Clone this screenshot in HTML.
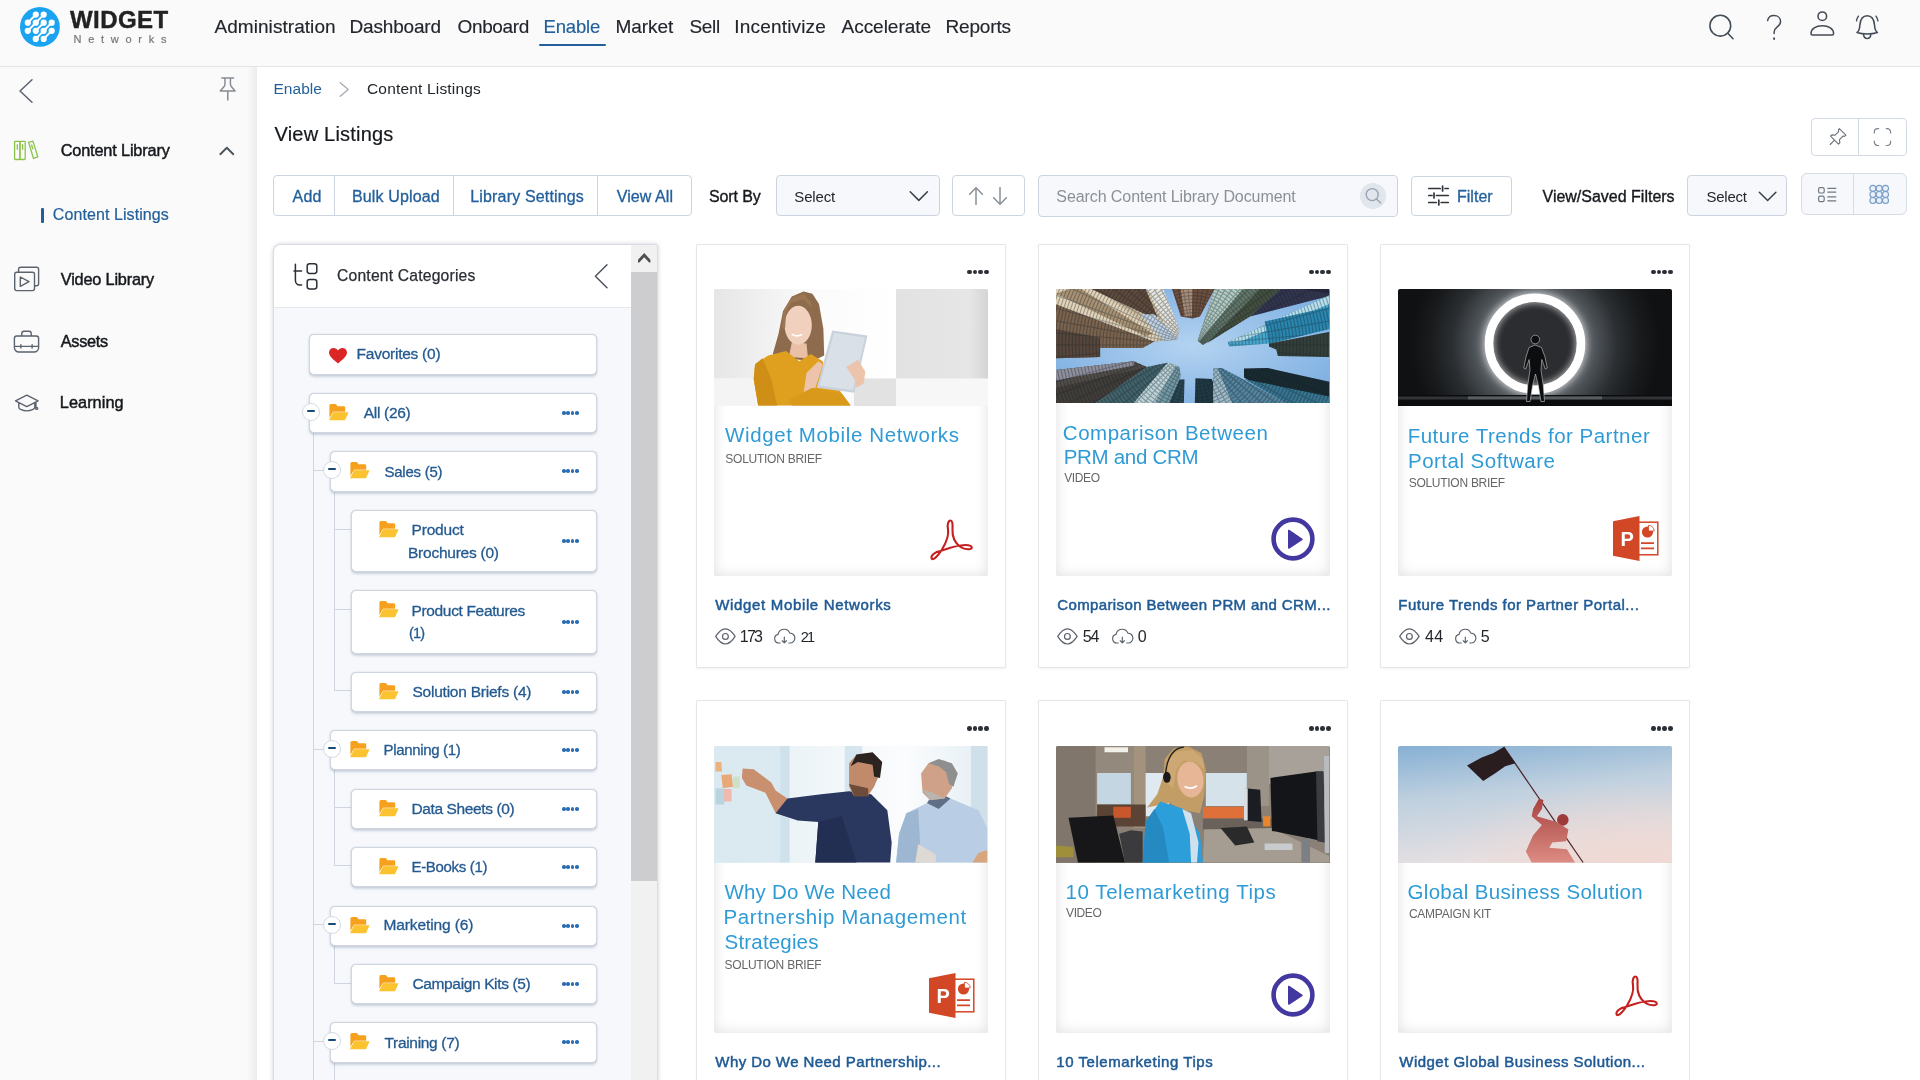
<!DOCTYPE html>
<html lang="en">
<head>
<meta charset="utf-8">
<title>View Listings - Content Library</title>
<style>
*{box-sizing:border-box;margin:0;padding:0}
html,body{width:1920px;height:1080px;overflow:hidden;background:#fff}
body{font-family:"Liberation Sans",Arial,sans-serif;color:#1f2329;position:relative;font-size:16px}
.top,.side,.main{will-change:transform}
svg{display:block;overflow:visible;position:absolute}
a{text-decoration:none;color:inherit}
.t{position:absolute;white-space:nowrap;line-height:1;display:block}
.abs{position:absolute}
/* top bar */
.top{position:absolute;left:0;top:0;width:1920px;height:67px;background:#fafafa;border-bottom:1px solid #e2e6eb;z-index:5}
.nav .t{color:#22262c}
.nav .on{color:#23609b}
.nav u{position:absolute;left:539px;top:44px;width:67px;height:2px;background:#23609b;border-radius:1px}
/* sidebar */
.side{position:absolute;left:0;top:67px;width:257px;height:1013px;background:#fafafa;z-index:3}
.side:after{content:"";position:absolute;right:0;top:0;width:10px;height:100%;background:linear-gradient(to right,rgba(0,0,0,0),rgba(0,0,0,.055))}
.side .t{color:#15181c}
.side .cur{color:#23609b}
.side .bar{position:absolute;left:41px;top:141px;width:3px;height:15px;background:#23609b;border-radius:1px}
/* main */
.main{position:absolute;left:257px;top:67px;width:1663px;height:1013px;background:#fff;z-index:2}
.box{position:absolute;background:#fff;border:1px solid #ccd5df;border-radius:4px}
.sel{position:absolute;background:#f6f8fb;border:1px solid #ccd5df;border-radius:4px}
.vd{position:absolute;width:1px;background:#ccd5df}
.blue{color:#23609c}
/* tree panel */
.panel{position:absolute;left:16px;top:177px;width:386px;height:840px;background:#f6f8fc;border:1px solid #d9dde3;border-bottom:0;border-radius:8px 3px 0 0;box-shadow:0 0 4px rgba(40,50,70,.22);overflow:hidden}
.phead{position:absolute;left:0;top:0;width:357px;height:63px;background:#fff;border-bottom:1px solid #e3e8ef}
.sbar{position:absolute;left:357px;top:0;width:27px;height:840px;background:#f1f1f1}
.sbar .up{position:absolute;left:0;top:0;width:27px;height:27px;background:#f1f1f1}
.sbar .th{position:absolute;left:0;top:27px;width:27px;height:609px;background:#cdcdcf}
.node{position:absolute;background:#fff;border:1px solid #d0d6df;border-radius:5px;box-shadow:0 1.500px 2.500px rgba(70,90,120,.24),0 0 1px rgba(70,90,120,.25)}
.node .t{color:#245a90}
.tg{position:absolute;width:18px;height:18px;border-radius:50%;background:#fff;border:1px solid #d3dae4}
.tg:after{content:"";position:absolute;left:4px;top:6.5px;width:8px;height:2px;background:#174a7c;border-radius:1px}
.ln{position:absolute;background:#cfd6df}
.dots{position:absolute;width:17px;height:4px}
.dots i{position:absolute;top:0;width:3.6px;height:3.6px;border-radius:50%;background:#2a6db5}
/* cards */
.card{position:absolute;width:310px;height:424px;background:#fff;border:1px solid #e5e6e9;border-radius:1px;box-shadow:0 1px 2px rgba(0,0,0,.05)}
.card .t{color:#22262b}
.thumb{position:absolute;left:17px;top:45px;width:274px;height:287px;background:#fff;box-shadow:inset 0 0 14px rgba(0,0,0,.13);overflow:hidden;border-radius:2px}
.thumb .tt{color:#2f9bd6}
.thumb .ts{color:#666}
.cd{position:absolute;width:22px;height:5px}
.cd i{position:absolute;top:0;width:4.6px;height:4.6px;border-radius:50%;background:#2b2f36}
</style>
</head>
<body>
<header class="top">
<svg style="left:0;top:0" width="70" height="56" viewBox="0 0 70 56"><circle cx="39.9" cy="26.9" r="19.9" fill="#1aa3f0"/><g stroke="#fff" stroke-width="2" stroke-linecap="round"><line x1="35.8" y1="14.6" x2="27.8" y2="22.7"/><line x1="43.7" y1="14.6" x2="35.8" y2="22.7"/><line x1="35.8" y1="22.7" x2="27.8" y2="30.8"/><line x1="43.7" y1="22.7" x2="35.8" y2="30.8"/><line x1="51.7" y1="22.7" x2="43.7" y2="30.8"/><line x1="43.7" y1="30.8" x2="35.8" y2="38.9"/><line x1="51.7" y1="30.8" x2="43.7" y2="38.9"/></g><g fill="#fff"><circle cx="35.8" cy="14.6" r="3.1"/><circle cx="43.7" cy="14.6" r="3.1"/><circle cx="27.8" cy="22.7" r="3.1"/><circle cx="35.8" cy="22.7" r="3.1"/><circle cx="43.7" cy="22.7" r="3.1"/><circle cx="51.7" cy="22.7" r="3.1"/><circle cx="27.8" cy="30.8" r="3.1"/><circle cx="35.8" cy="30.8" r="3.1"/><circle cx="43.7" cy="30.8" r="3.1"/><circle cx="51.7" cy="30.8" r="3.1"/><circle cx="35.8" cy="38.9" r="3.1"/><circle cx="43.7" cy="38.9" r="3.1"/></g></svg>
<span class="t" style="left:70.00px;top:8px;font-size:24px;letter-spacing:0.414px;font-weight:700;color:#222;-webkit-text-stroke:0.4px currentColor;">WIDGET</span>
<span class="t" style="left:73.50px;top:34px;font-size:11px;letter-spacing:6.737px;color:#777;-webkit-text-stroke:0.2px currentColor;">Networks</span>
<nav class="nav">
<a class="t" style="left:214.50px;top:17px;font-size:19px;letter-spacing:0.053px;-webkit-text-stroke:0.15px currentColor;">Administration</a>
<a class="t" style="left:349.50px;top:17px;font-size:19px;letter-spacing:-0.173px;-webkit-text-stroke:0.15px currentColor;">Dashboard</a>
<a class="t" style="left:457.50px;top:17px;font-size:19px;letter-spacing:-0.346px;-webkit-text-stroke:0.15px currentColor;">Onboard</a>
<a class="t on" style="left:543.50px;top:18px;font-size:18.5px;letter-spacing:-0.163px;-webkit-text-stroke:0.15px currentColor;">Enable</a>
<a class="t" style="left:615.40px;top:17px;font-size:19px;letter-spacing:-0.038px;-webkit-text-stroke:0.15px currentColor;">Market</a>
<a class="t" style="left:689.50px;top:17px;font-size:19px;letter-spacing:-0.320px;-webkit-text-stroke:0.15px currentColor;">Sell</a>
<a class="t" style="left:734.30px;top:17px;font-size:19px;letter-spacing:0.180px;-webkit-text-stroke:0.15px currentColor;">Incentivize</a>
<a class="t" style="left:841.50px;top:17px;font-size:19px;letter-spacing:-0.022px;-webkit-text-stroke:0.15px currentColor;">Accelerate</a>
<a class="t" style="left:945.50px;top:17px;font-size:19px;letter-spacing:-0.171px;-webkit-text-stroke:0.15px currentColor;">Reports</a>
<u></u></nav>
<svg style="left:1700px;top:8px" width="200" height="40" viewBox="1700 8 200 40" fill="none" stroke="#444c56" stroke-width="1.55" stroke-linecap="round" stroke-linejoin="round">
<circle cx="1720.3" cy="25.7" r="10.4"/><path d="M1727.8 33.2 L1733 38.8"/>
<path d="M1767.6 20.6c.6-3 3-5 6.4-5 3.8 0 6.6 2.500 6.600 6 0 2.600-1.500 4-3.600 5.600-2 1.500-2.900 2.700-2.900 5v1.300" stroke-width="1.5"/><path d="M1774.100 38.200v.8" stroke-width="1.900"/>
<circle cx="1822.3" cy="16.2" r="4.3"/><path d="M1811 33.500c0-4.500 4.800-7.800 11.300-7.800s11.300 3.300 11.300 7.800c0 .9-.5 1.400-1.400 1.400h-19.800c-.9 0-1.400-.5-1.400-1.400z"/>
<path d="M1857 32.400c2.300-1.200 2.600-3.500 2.900-7.400.4-5.500 2.900-9.300 7.300-9.300s6.900 3.800 7.300 9.300c.3 3.900.6 6.200 2.900 7.400-3 1-6.400 1.500-10.200 1.500s-7.200-.5-10.200-1.500z"/><path d="M1863.600 34.800c.4 2.400 1.700 3.700 3.600 3.700s3.200-1.300 3.600-3.700"/>
<path d="M1858.400 16.200c-.9 1.300-1.600 2.900-1.900 4.600M1876 16.200c.9 1.300 1.600 2.900 1.900 4.600" stroke-width="1.400"/>
</svg>
</header>
<aside class="side">
<svg style="left:0;top:0" width="257" height="360" viewBox="0 67 257 360" fill="none" stroke="#5b636d" stroke-width="1.4" stroke-linecap="round" stroke-linejoin="round">
<path d="M32 79.800 20 91 32 102.300" stroke-width="1.5"/>
<path d="M221.800 78.100h11.800M224.900 78.500c0 3.500.6 6-.4 7.500l-4.200 4.900h14.800l-4.200-4.900c-1-1.500-.4-4-.4-7.500M227.800 91.300v8.800" stroke="#868c93" stroke-width="1.500"/>
<g stroke="#8bc34a" stroke-width="1.300"><rect x="14.600" y="141.300" width="5.300" height="18.200" rx=".8"/><rect x="19.900" y="141.300" width="5.300" height="18.200" rx=".8"/><path d="M17.300 144.600v4.600M22.600 144.600v4.600"/><path d="M28.600 142.300l4.300-1.200 4.900 15.700-4.300 1.700zM31.600 145l1.200 3.800"/></g>
<path d="M220.300 154.200l6.500-6.400 6.500 6.400" stroke="#4a525c" stroke-width="1.900"/>
<rect x="14.700" y="272.200" width="19.800" height="18.400" rx="2"/><path d="M18.600 272v-2.800a2 2 0 0 1 2-2h16a2 2 0 0 1 2 2v14.600a2 2 0 0 1-2 2h-2"/><path d="M20.300 277v9.400l8.700-4.700z"/>
<path d="M14.400 338.300a2.300 2.300 0 0 1 2.300-2.300h19.600a2.300 2.300 0 0 1 2.300 2.300v9.200a4.500 4.500 0 0 1-4.500 4.500h-15.200a4.500 4.500 0 0 1-4.500-4.500zM21.800 335.800v-2.300a2.200 2.200 0 0 1 2.200-2.200h5a2.200 2.200 0 0 1 2.200 2.200v2.300M14.600 346.400h23.800M20.900 344.800v3.200M32.100 344.800v3.200"/>
<path d="M26.800 395.200 15.500 400.800l11.300 5.800 11.300-5.800zM18.800 403v4.300c0 1.700 3.600 3.600 8 3.600s8-1.900 8-3.600v-4.300M35.900 402v5.300"/><circle cx="36.700" cy="408.400" r="1"/>
</svg>
<span class="t" style="left:60.70px;top:75px;font-size:16.3px;letter-spacing:-0.155px;-webkit-text-stroke:0.45px currentColor;">Content Library</span>
<i class="bar"></i>
<span class="t cur" style="left:52.80px;top:140px;font-size:16px;letter-spacing:0.084px;-webkit-text-stroke:0.2px currentColor;">Content Listings</span>
<span class="t" style="left:60.80px;top:204px;font-size:16.3px;letter-spacing:-0.191px;-webkit-text-stroke:0.45px currentColor;">Video Library</span>
<span class="t" style="left:60.80px;top:266px;font-size:16.3px;letter-spacing:-0.304px;-webkit-text-stroke:0.45px currentColor;">Assets</span>
<span class="t" style="left:59.80px;top:327px;font-size:16.3px;letter-spacing:0.055px;-webkit-text-stroke:0.45px currentColor;">Learning</span>
</aside>
<main class="main">
<a class="t" style="left:16.50px;top:14px;font-size:15.5px;letter-spacing:0.031px;color:#23609b;">Enable</a>
<span class="t" style="left:110.00px;top:14px;font-size:15.5px;letter-spacing:0.173px;color:#22262b;">Content Listings</span>
<h1 class="t" style="left:17.50px;top:57px;font-size:20px;letter-spacing:0.204px;color:#15181c;-webkit-text-stroke:0.2px currentColor;font-weight:400;">View Listings</h1>
<div class="box" style="left:16.0px;top:108.0px;width:419.0px;height:41.0px;"></div>
<i class="vd" style="left:77.2px;top:109px;height:39px"></i>
<i class="vd" style="left:196.2px;top:109px;height:39px"></i>
<i class="vd" style="left:340.2px;top:109px;height:39px"></i>
<a class="t" style="left:35.50px;top:122px;font-size:16px;letter-spacing:0.215px;color:#23609c;-webkit-text-stroke:0.3px currentColor;">Add</a>
<a class="t" style="left:95.00px;top:122px;font-size:16px;letter-spacing:0.143px;color:#23609c;-webkit-text-stroke:0.3px currentColor;">Bulk Upload</a>
<a class="t" style="left:213.30px;top:122px;font-size:16px;letter-spacing:0.156px;color:#23609c;-webkit-text-stroke:0.3px currentColor;">Library Settings</a>
<a class="t" style="left:359.80px;top:122px;font-size:16px;letter-spacing:0.062px;color:#23609c;-webkit-text-stroke:0.3px currentColor;">View All</a>
<span class="t" style="left:452.00px;top:122px;font-size:16px;letter-spacing:-0.110px;color:#15181c;-webkit-text-stroke:0.35px currentColor;">Sort By</span>
<div class="sel" style="left:519.0px;top:108.0px;width:164.0px;height:41.0px;"></div>
<span class="t" style="left:537.30px;top:122px;font-size:15px;letter-spacing:-0.164px;color:#23272d;">Select</span>
<div class="box" style="left:695.0px;top:108.0px;width:73.0px;height:41.0px;"></div>
<div class="sel" style="left:781.0px;top:108.0px;width:360.0px;height:42.0px;"></div>
<span class="t" style="left:799.30px;top:122px;font-size:16px;letter-spacing:-0.082px;color:#8b9097;">Search Content Library Document</span>
<i class="abs" style="left:1103px;top:115.5px;width:26px;height:26px;border-radius:50%;background:#e1e6ec"></i>
<div class="box" style="left:1153.5px;top:109.0px;width:101.0px;height:40.0px;"></div>
<span class="t" style="left:1200.00px;top:122px;font-size:16px;letter-spacing:0.015px;color:#23609c;-webkit-text-stroke:0.3px currentColor;">Filter</span>
<span class="t" style="left:1285.50px;top:122px;font-size:16px;letter-spacing:-0.006px;color:#15181c;-webkit-text-stroke:0.35px currentColor;">View/Saved Filters</span>
<div class="sel" style="left:1430.0px;top:108.0px;width:100.0px;height:40.5px;"></div>
<span class="t" style="left:1449.50px;top:122px;font-size:15px;letter-spacing:-0.264px;color:#23272d;">Select</span>
<div class="sel" style="left:1543.5px;top:106.3px;width:106.5px;height:42.1px;border-radius:6px;border-color:#d5dce5"></div>
<i class="vd" style="left:1596px;top:107.3px;height:40px;background:#d5dce5"></i>
<div class="box" style="left:1554.4px;top:51.0px;width:95.6px;height:38.0px;border-color:#d3dae3"></div>
<i class="vd" style="left:1601.3px;top:52.0px;height:36px;background:#d3dae3"></i>
<svg style="left:0;top:0" width="1663" height="170" viewBox="257 67 1663 170" fill="none" stroke-linecap="round" stroke-linejoin="round">
<path d="M340.200 82.700l8 6.800-8 6.800" stroke="#a4aab1" stroke-width="1.300"/>
<path d="M910.200 191.700l8.600 8.700 8.600-8.700" stroke="#3a4048" stroke-width="1.500"/>
<path d="M1759.300 192.200l8.300 8.300 8.300-8.300" stroke="#3a4048" stroke-width="1.500"/>
<g stroke="#8b9198" stroke-width="1.500"><path d="M976 204.500v-16.500M969.600 194.300l6.400-6.600 6.400 6.600"/><path d="M1000 187.500v16.500M993.600 197.700l6.400 6.600 6.400-6.600"/></g>
<g stroke="#98a4b1" stroke-width="1.400"><circle cx="1372.200" cy="194.600" r="6"/><path d="M1376.600 199l4 4"/></g>
<g stroke="#2f343b" stroke-width="1.700"><path d="M1428.800 188.500h11.400M1442.600 186v5M1445 188.500h3.200M1428.800 195.500h3.200M1434 193v5M1436.400 195.500h11.800M1428.800 202.500h7.400M1438.800 200v5M1441.200 202.500h7"/></g>
<g stroke="#707882" stroke-width="1.200"><rect x="1818.600" y="187.600" width="5.600" height="5.400" rx="1.600"/><rect x="1818.600" y="196.200" width="5.600" height="5.400" rx="1.600"/><path d="M1827.800 188.300h8M1827.800 192.100h8M1827.800 196.900h8M1827.800 200.800h8"/></g>
<g stroke="#7a9cc4" stroke-width="1.100" fill="#e8f1fb"><circle cx="1872.9" cy="188.4" r="3"/><circle cx="1879.2" cy="188.4" r="3"/><circle cx="1885.5" cy="188.4" r="3"/><circle cx="1872.9" cy="194.5" r="3"/><circle cx="1879.2" cy="194.5" r="3"/><circle cx="1885.5" cy="194.5" r="3"/><circle cx="1872.9" cy="200.5" r="3"/><circle cx="1879.2" cy="200.5" r="3"/><circle cx="1885.5" cy="200.5" r="3"/></g>
<g stroke="#6b727b" stroke-width="1.100"><path d="M1839.300 128.600l6.600 6.600-1.500 1.200-1.300-.4-3.600 3.600.3 3.300-1.300 1.300-8-8 1.300-1.300 3.300.3 3.600-3.600-.4-1.300zM1834.500 140.200l-4.300 4.300"/></g>
<g stroke="#7b838d" stroke-width="1.200"><path d="M1874.300 133v-.9a3.400 3.400 0 0 1 3.400-3.400h.9M1886.300 128.700h.9a3.400 3.400 0 0 1 3.400 3.400v.9M1890.600 141.200v.9a3.400 3.400 0 0 1-3.400 3.400h-.9M1878.600 145.500h-.9a3.400 3.400 0 0 1-3.400-3.400v-.9"/></g>
</svg>
<section class="panel" style="left:16px;top:177px;width:385px;height:840px">
<div class="phead"></div>
<svg style="left:0;top:0" width="357" height="62" viewBox="274 245 357 62" fill="none" stroke="#2b2f36" stroke-width="1.500" stroke-linecap="round" stroke-linejoin="round">
<path d="M295.400 264.200v16.400a4.400 4.400 0 0 0 4.400 4.400h1.800M294 270.900h7.600"/><rect x="307.200" y="263.700" width="9.600" height="9.700" rx="2.400"/><rect x="307.200" y="279.400" width="9.600" height="9.500" rx="2.400"/>
<path d="M607 264.800 595.400 276.300 607 287.800" stroke="#4a5059" stroke-width="1.400"/></svg>
<span class="t" style="left:63.00px;top:23px;font-size:15.7px;letter-spacing:0.187px;color:#2a2e35;-webkit-text-stroke:0.25px currentColor;">Content Categories</span>
<div class="sbar"><i class="up"></i><i class="th"></i><svg style="left:6.800px;top:7.600px" width="12.400" height="9.600" viewBox="0 0 12.400 9.600"><path d="M0 6.800 6.200 0l6.200 6.800v2.800h-1.300L6.200 4.300 1.300 9.600H0z" fill="#505050"/></svg></div>
<i class="ln" style="left:39.0px;top:188.0px;width:1.0px;height:652.0px"></i>
<i class="ln" style="left:39.0px;top:224.5px;width:11.0px;height:1.0px"></i>
<i class="ln" style="left:39.0px;top:503.5px;width:11.0px;height:1.0px"></i>
<i class="ln" style="left:39.0px;top:679.0px;width:11.0px;height:1.0px"></i>
<i class="ln" style="left:39.0px;top:796.0px;width:11.0px;height:1.0px"></i>
<i class="ln" style="left:60.0px;top:247.0px;width:1.0px;height:199.0px"></i>
<i class="ln" style="left:60.0px;top:283.8px;width:18.0px;height:1.0px"></i>
<i class="ln" style="left:60.0px;top:364.0px;width:18.0px;height:1.0px"></i>
<i class="ln" style="left:60.0px;top:445.0px;width:18.0px;height:1.0px"></i>
<i class="ln" style="left:60.0px;top:525.0px;width:1.0px;height:96.3px"></i>
<i class="ln" style="left:60.0px;top:562.0px;width:18.0px;height:1.0px"></i>
<i class="ln" style="left:60.0px;top:620.3px;width:18.0px;height:1.0px"></i>
<i class="ln" style="left:60.0px;top:701.0px;width:1.0px;height:37.5px"></i>
<i class="ln" style="left:60.0px;top:738.0px;width:18.0px;height:1.0px"></i>
<i class="ln" style="left:60.0px;top:818.0px;width:1.0px;height:22.0px"></i>
<div class="node" style="left:35.00px;top:89.00px;width:288.00px;height:41.00px"><svg style="left:18.9px;top:12.6px" width="18" height="15.500" viewBox="0 0 18 15.500"><path d="M9 15.500C3.500 11 0 8.200 0 4.600 0 2 2 0 4.600 0 6.500 0 8.100 1 9 2.500 9.900 1 11.500 0 13.400 0 16 0 18 2 18 4.600c0 3.600-3.500 6.400-9 10.900z" fill="#dc2626"/></svg><span class="t" style="left:46.60px;top:11px;font-size:15.5px;letter-spacing:-0.252px;-webkit-text-stroke:0.3px currentColor;">Favorites (0)</span></div>
<div class="node" style="left:35.00px;top:148.00px;width:288.00px;height:40.00px"><svg style="left:19.4px;top:10.2px" width="20" height="17" viewBox="0 0 20 17"><path d="M.4 1.600Q.4 0 2 0h4.200q.9 0 1.400.8l.8 1.400h6.400q1.400 0 1.400 1.400V9H3.500L.4 14z" fill="#f6a11e"/><path d="M0 16.300 4.100 8.200h15.500l-3.600 8.100z" fill="#fbc330" stroke="#fff" stroke-width="1" paint-order="stroke"/></svg><span class="t" style="left:53.80px;top:11px;font-size:15.5px;letter-spacing:-0.319px;-webkit-text-stroke:0.3px currentColor;">All (26)</span><span class="dots" style="left:252px;top:17px"><i style="left:0.0px"></i><i style="left:4.4px"></i><i style="left:8.8px"></i><i style="left:13.2px"></i></span></div><i class="tg" style="left:28.0px;top:157.5px"></i>
<div class="node" style="left:56.00px;top:206.00px;width:267.00px;height:41.00px"><svg style="left:19.4px;top:10.2px" width="20" height="17" viewBox="0 0 20 17"><path d="M.4 1.600Q.4 0 2 0h4.200q.9 0 1.400.8l.8 1.400h6.400q1.400 0 1.400 1.400V9H3.500L.4 14z" fill="#f6a11e"/><path d="M0 16.300 4.100 8.200h15.500l-3.600 8.100z" fill="#fbc330" stroke="#fff" stroke-width="1" paint-order="stroke"/></svg><span class="t" style="left:53.50px;top:12px;font-size:15.0px;letter-spacing:-0.253px;-webkit-text-stroke:0.3px currentColor;">Sales (5)</span><span class="dots" style="left:231px;top:17px"><i style="left:0.0px"></i><i style="left:4.4px"></i><i style="left:8.8px"></i><i style="left:13.2px"></i></span></div><i class="tg" style="left:49.0px;top:215.5px"></i>
<div class="node" style="left:77.00px;top:265.00px;width:246.00px;height:62.00px"><svg style="left:26.8px;top:10.2px" width="20" height="17" viewBox="0 0 20 17"><path d="M.4 1.600Q.4 0 2 0h4.200q.9 0 1.400.8l.8 1.400h6.400q1.400 0 1.400 1.400V9H3.500L.4 14z" fill="#f6a11e"/><path d="M0 16.300 4.100 8.200h15.500l-3.600 8.100z" fill="#fbc330" stroke="#fff" stroke-width="1" paint-order="stroke"/></svg><span class="t" style="left:59.50px;top:11px;font-size:15.5px;letter-spacing:-0.185px;-webkit-text-stroke:0.3px currentColor;">Product</span><span class="t" style="left:56.00px;top:34px;font-size:15.5px;letter-spacing:-0.244px;-webkit-text-stroke:0.3px currentColor;">Brochures (0)</span><span class="dots" style="left:210px;top:28px"><i style="left:0.0px"></i><i style="left:4.4px"></i><i style="left:8.8px"></i><i style="left:13.2px"></i></span></div>
<div class="node" style="left:77.00px;top:345.00px;width:246.00px;height:64.00px"><svg style="left:26.8px;top:10.2px" width="20" height="17" viewBox="0 0 20 17"><path d="M.4 1.600Q.4 0 2 0h4.200q.9 0 1.400.8l.8 1.400h6.400q1.400 0 1.400 1.400V9H3.500L.4 14z" fill="#f6a11e"/><path d="M0 16.300 4.100 8.200h15.500l-3.600 8.100z" fill="#fbc330" stroke="#fff" stroke-width="1" paint-order="stroke"/></svg><span class="t" style="left:59.50px;top:12px;font-size:15.5px;letter-spacing:-0.343px;-webkit-text-stroke:0.3px currentColor;">Product Features</span><span class="t" style="left:57.00px;top:35px;font-size:14.5px;letter-spacing:-0.796px;-webkit-text-stroke:0.3px currentColor;">(1)</span><span class="dots" style="left:210px;top:29px"><i style="left:0.0px"></i><i style="left:4.4px"></i><i style="left:8.8px"></i><i style="left:13.2px"></i></span></div>
<div class="node" style="left:77.00px;top:427.00px;width:246.00px;height:40.00px"><svg style="left:26.8px;top:10.2px" width="20" height="17" viewBox="0 0 20 17"><path d="M.4 1.600Q.4 0 2 0h4.200q.9 0 1.400.8l.8 1.400h6.400q1.400 0 1.400 1.400V9H3.500L.4 14z" fill="#f6a11e"/><path d="M0 16.300 4.100 8.200h15.500l-3.600 8.100z" fill="#fbc330" stroke="#fff" stroke-width="1" paint-order="stroke"/></svg><span class="t" style="left:60.50px;top:11px;font-size:15.5px;letter-spacing:-0.235px;-webkit-text-stroke:0.3px currentColor;">Solution Briefs (4)</span><span class="dots" style="left:210px;top:17px"><i style="left:0.0px"></i><i style="left:4.4px"></i><i style="left:8.8px"></i><i style="left:13.2px"></i></span></div>
<div class="node" style="left:56.00px;top:485.00px;width:267.00px;height:40.00px"><svg style="left:19.4px;top:10.2px" width="20" height="17" viewBox="0 0 20 17"><path d="M.4 1.600Q.4 0 2 0h4.200q.9 0 1.400.8l.8 1.400h6.400q1.400 0 1.400 1.400V9H3.500L.4 14z" fill="#f6a11e"/><path d="M0 16.300 4.100 8.200h15.500l-3.600 8.100z" fill="#fbc330" stroke="#fff" stroke-width="1" paint-order="stroke"/></svg><span class="t" style="left:52.50px;top:11px;font-size:15.0px;letter-spacing:-0.326px;-webkit-text-stroke:0.3px currentColor;">Planning (1)</span><span class="dots" style="left:231px;top:17px"><i style="left:0.0px"></i><i style="left:4.4px"></i><i style="left:8.8px"></i><i style="left:13.2px"></i></span></div><i class="tg" style="left:49.0px;top:494.5px"></i>
<div class="node" style="left:77.00px;top:544.00px;width:246.00px;height:40.00px"><svg style="left:26.8px;top:10.2px" width="20" height="17" viewBox="0 0 20 17"><path d="M.4 1.600Q.4 0 2 0h4.200q.9 0 1.400.8l.8 1.400h6.400q1.400 0 1.400 1.400V9H3.500L.4 14z" fill="#f6a11e"/><path d="M0 16.300 4.100 8.200h15.500l-3.600 8.100z" fill="#fbc330" stroke="#fff" stroke-width="1" paint-order="stroke"/></svg><span class="t" style="left:59.50px;top:11px;font-size:15.5px;letter-spacing:-0.385px;-webkit-text-stroke:0.3px currentColor;">Data Sheets (0)</span><span class="dots" style="left:210px;top:17px"><i style="left:0.0px"></i><i style="left:4.4px"></i><i style="left:8.8px"></i><i style="left:13.2px"></i></span></div>
<div class="node" style="left:77.00px;top:602.00px;width:246.00px;height:40.00px"><svg style="left:26.8px;top:10.2px" width="20" height="17" viewBox="0 0 20 17"><path d="M.4 1.600Q.4 0 2 0h4.200q.9 0 1.400.8l.8 1.400h6.400q1.400 0 1.400 1.400V9H3.500L.4 14z" fill="#f6a11e"/><path d="M0 16.300 4.100 8.200h15.500l-3.600 8.100z" fill="#fbc330" stroke="#fff" stroke-width="1" paint-order="stroke"/></svg><span class="t" style="left:59.50px;top:11px;font-size:15.0px;letter-spacing:-0.319px;-webkit-text-stroke:0.3px currentColor;">E-Books (1)</span><span class="dots" style="left:210px;top:17px"><i style="left:0.0px"></i><i style="left:4.4px"></i><i style="left:8.8px"></i><i style="left:13.2px"></i></span></div>
<div class="node" style="left:56.00px;top:661.00px;width:267.00px;height:40.00px"><svg style="left:19.4px;top:10.2px" width="20" height="17" viewBox="0 0 20 17"><path d="M.4 1.600Q.4 0 2 0h4.200q.9 0 1.400.8l.8 1.400h6.400q1.400 0 1.400 1.400V9H3.500L.4 14z" fill="#f6a11e"/><path d="M0 16.300 4.100 8.200h15.500l-3.600 8.100z" fill="#fbc330" stroke="#fff" stroke-width="1" paint-order="stroke"/></svg><span class="t" style="left:52.50px;top:10px;font-size:15.5px;letter-spacing:-0.112px;-webkit-text-stroke:0.3px currentColor;">Marketing (6)</span><span class="dots" style="left:231px;top:17px"><i style="left:0.0px"></i><i style="left:4.4px"></i><i style="left:8.8px"></i><i style="left:13.2px"></i></span></div><i class="tg" style="left:49.0px;top:670.5px"></i>
<div class="node" style="left:77.00px;top:719.00px;width:246.00px;height:40.00px"><svg style="left:26.8px;top:10.2px" width="20" height="17" viewBox="0 0 20 17"><path d="M.4 1.600Q.4 0 2 0h4.200q.9 0 1.400.8l.8 1.400h6.400q1.400 0 1.400 1.400V9H3.500L.4 14z" fill="#f6a11e"/><path d="M0 16.300 4.100 8.200h15.500l-3.600 8.100z" fill="#fbc330" stroke="#fff" stroke-width="1" paint-order="stroke"/></svg><span class="t" style="left:60.50px;top:11px;font-size:15.5px;letter-spacing:-0.368px;-webkit-text-stroke:0.3px currentColor;">Campaign Kits (5)</span><span class="dots" style="left:210px;top:17px"><i style="left:0.0px"></i><i style="left:4.4px"></i><i style="left:8.8px"></i><i style="left:13.2px"></i></span></div>
<div class="node" style="left:56.00px;top:777.00px;width:267.00px;height:41.00px"><svg style="left:19.4px;top:10.2px" width="20" height="17" viewBox="0 0 20 17"><path d="M.4 1.600Q.4 0 2 0h4.200q.9 0 1.400.8l.8 1.400h6.400q1.400 0 1.400 1.400V9H3.500L.4 14z" fill="#f6a11e"/><path d="M0 16.300 4.100 8.200h15.500l-3.600 8.100z" fill="#fbc330" stroke="#fff" stroke-width="1" paint-order="stroke"/></svg><span class="t" style="left:53.50px;top:12px;font-size:15.5px;letter-spacing:-0.319px;-webkit-text-stroke:0.3px currentColor;">Training (7)</span><span class="dots" style="left:231px;top:17px"><i style="left:0.0px"></i><i style="left:4.4px"></i><i style="left:8.8px"></i><i style="left:13.2px"></i></span></div><i class="tg" style="left:49.0px;top:786.5px"></i>
<div class="node" style="left:77.00px;top:836.00px;width:246.00px;height:40.00px"><svg style="left:26.8px;top:10.2px" width="20" height="17" viewBox="0 0 20 17"><path d="M.4 1.600Q.4 0 2 0h4.200q.9 0 1.400.8l.8 1.400h6.400q1.400 0 1.400 1.400V9H3.500L.4 14z" fill="#f6a11e"/><path d="M0 16.300 4.100 8.200h15.500l-3.600 8.100z" fill="#fbc330" stroke="#fff" stroke-width="1" paint-order="stroke"/></svg><span class="t" style="left:60.50px;top:11px;font-size:15.0px;letter-spacing:-0.205px;-webkit-text-stroke:0.3px currentColor;">Training Decks (7)</span><span class="dots" style="left:210px;top:17px"><i style="left:0.0px"></i><i style="left:4.4px"></i><i style="left:8.8px"></i><i style="left:13.2px"></i></span></div>
</section>
<article class="card" style="left:439.25px;top:176.75px"><span class="cd" style="left:269.8px;top:24.9px"><i style="left:0.00px"></i><i style="left:5.63px"></i><i style="left:11.26px"></i><i style="left:16.89px"></i></span><div class="thumb" style="left:17.0px;top:44.5px"><svg style="left:0;top:0" width="274" height="117" viewBox="0 0 274 117"><defs><linearGradient id="g1a" x1="0" x2="1"><stop offset="0" stop-color="#e6e6e6"/><stop offset=".55" stop-color="#fbfbfb"/><stop offset="1" stop-color="#ffffff"/></linearGradient><linearGradient id="g1b" x1="0" x2="1"><stop offset="0" stop-color="#e2e2e2"/><stop offset=".8" stop-color="#e6e6e6"/><stop offset="1" stop-color="#d4d4d4"/></linearGradient></defs><rect width="274" height="117" fill="#f7f7f7"/><rect width="182" height="89.500" fill="url(#g1a)"/><rect x="182" width="92" height="89.500" fill="url(#g1b)"/><rect x="140" y="89.500" width="42" height="27.500" fill="#e2e2e2"/><rect y="89.500" width="42" height="27.500" fill="#f4f4f4"/><rect x="42" y="89.500" width="98" height="27.500" fill="#fafafa"/><polygon points="89.6,2.5 98.4,4.7 105.0,15.0 109.4,40.0 110.2,66.4 98.4,72.3 72.0,69.3 58.8,64.9 64.6,44.4 69.0,22.3 77.8,7.6" fill="#8d6b4c" /><polygon points="77.8,53.2 92.5,54.6 94.0,69.3 74.9,67.9" fill="#e9bfa6" /><ellipse cx="84.2" cy="36.3" rx="13.600" ry="19.500" fill="#f1d0bd"/><polygon points="72.0,23.8 77.8,13.5 89.6,10.6 98.4,19.4 96.9,13.5 89.6,4.7 77.8,8.4 69.8,20.9 67.6,40.0 71.2,38.5" fill="#9a7653" /><path d="M77.8 45.1q5 3.500 10.500 .3" stroke="#fff" stroke-width="1.600" fill="none"/><polygon points="44.1,116.6 39.7,89.9 41.1,75.2 54.3,66.4 72.0,62.0 85.2,72.3 96.9,64.9 108.7,72.3 113.1,84.0 127.8,104.6 136.6,116.6" fill="#e0a01f" /><polygon points="44.1,116.6 39.7,89.9 41.1,75.2 48.5,69.3 57.3,89.9 63.2,116.6" fill="#cf8f17" /><polygon points="118.2,41.4 153.5,46.6 140.3,103.8 102.8,98.7" fill="#c9d2dc" /><polygon points="120.1,44.1 151.0,48.5 138.8,100.9 105.5,96.5" fill="#d9e0e8" /><polygon points="92.5,84.0 104.3,72.3 108.7,75.2 104.3,89.9 98.4,107.5 89.6,104.6" fill="#ecc4ab" /><polygon points="132.2,78.1 143.9,70.8 151.3,82.5 149.8,94.3 142.5,98.7 140.3,89.9" fill="#ecc4ab" /><polygon points="74.9,110.5 98.4,98.7 127.8,104.6 136.6,116.6 77.8,116.6" fill="#d99a1b" /></svg><span class="t tt" style="left:10.75px;top:135.75px;font-size:20.5px;letter-spacing:0.616px;">Widget Mobile Networks</span><span class="t ts" style="left:11.05px;top:163.75px;font-size:12.0px;letter-spacing:-0.253px;">SOLUTION BRIEF</span><svg style="left:215.5px;top:229.8px" width="43" height="42" viewBox="0 0 43 42" fill="none" stroke="#c5201f" stroke-width="2.100" stroke-linejoin="round" stroke-linecap="round"><path d="M1.700 39.600C.3 37 5 32.600 10.500 32c6.500-2 13.500-5 20-5.500 5.500-1 11.300-.5 11.300 2 0 2.500-6.800 2.500-11.300-.5C25 24 22 18 22.500 10c.5-6-.5-8.500-2-8.500-2 0-3.500 3.500-2.500 8.500 1 6-2 14-6 20.500C9 35.500 3.500 42 1.700 39.600z"/></svg></div><h3 class="t" style="left:18.05px;top:352.25px;font-size:15px;letter-spacing:0.656px;color:#1f5a94;-webkit-text-stroke:0.5px currentColor;font-weight:400;">Widget Mobile Networks</h3><svg style="left:17.5px;top:383.5px" width="21" height="17" viewBox="0 0 21 17" fill="none" stroke="#5a616b" stroke-width="1.200" stroke-linejoin="round"><path d="M.7 8.400C3.800 3.500 7 .8 10.400.8s6.600 2.700 9.700 7.600c-3.100 4.900-6.300 7.600-9.700 7.600S3.800 13.300.7 8.400z"/><circle cx="10.400" cy="8.400" r="2.900"/></svg><span class="t" style="left:42.55px;top:384.25px;font-size:16px;letter-spacing:-1.798px;">173</span><svg style="left:77.0px;top:383.2px" width="21" height="16.200" viewBox="0 0 22 17" fill="none" stroke="#5a616b" stroke-width="1.200" stroke-linecap="round" stroke-linejoin="round"><path d="M6.500 15.800H5.300a4.600 4.600 0 0 1-1-9.100 6.400 6.400 0 0 1 12.300-1.300 5.200 5.200 0 0 1 .2 10.400h-1.300"/><path d="M10.800 9.500v6M8.600 13.400l2.200 2.200 2.200-2.200"/></svg><span class="t" style="left:103.55px;top:385.25px;font-size:14.5px;letter-spacing:-1.864px;">21</span></article>
<article class="card" style="left:781.25px;top:176.75px"><span class="cd" style="left:269.8px;top:24.9px"><i style="left:0.00px"></i><i style="left:5.63px"></i><i style="left:11.26px"></i><i style="left:16.89px"></i></span><div class="thumb" style="left:17.0px;top:44.5px"><svg style="left:0;top:0" width="274" height="114" viewBox="0 0 274 114"><defs><radialGradient id="g2" cx=".5" cy=".5" r=".6"><stop offset="0" stop-color="#b4d3f1"/><stop offset="1" stop-color="#7fb0e2"/></radialGradient><g id="b2"><polygon points="0.0,15.0 98.4,52.4 86.7,59.0 44.1,59.0 44.1,67.9 0.0,69.3" fill="#7a624d" /><polygon points="0.0,40.0 44.1,48.8 44.1,67.9 0.0,69.3" fill="#57463b" /><polygon points="0.0,0.0 89.6,0.0 123.4,40.0 120.4,51.0 98.4,52.4 0.0,15.0" fill="#d3c1a3" /><polygon points="0.0,0.0 39.7,0.0 107.2,47.3 98.4,52.4 0.0,15.0" fill="#e2d3b8" /><polygon points="35.2,0.0 89.6,0.0 101.3,27.5 96.9,28.9" fill="#5f4a3c" /><polygon points="0.0,4.7 13.2,0.0 25.0,0.0 96.9,44.4 89.6,47.3" fill="#a89173" /><polygon points="91.1,0.0 107.2,0.0 123.4,40.0 121.6,50.5 113.1,44.4" fill="#e9e7e0" /><polygon points="83.7,25.3 98.4,25.3 121.9,50.5 107.2,51.7" fill="#c6d5e6" /><polygon points="116.0,0.0 158.6,0.0 143.9,27.5 136.6,29.4 124.8,27.5" fill="#6f4f3d" /><polygon points="124.8,0.0 136.6,0.0 135.9,27.5 128.5,27.5" fill="#a98d79" /><polygon points="158.6,0.0 224.7,0.0 193.9,27.5 146.9,56.1 141.7,51.7" fill="#64786a" /><polygon points="158.6,0.0 186.5,0.0 143.9,51.7 141.7,51.7" fill="#b3cbc2" /><polygon points="204.2,0.0 224.7,0.0 193.9,27.5 151.3,53.9" fill="#454f3f" /><polygon points="224.7,0.0 273.2,0.0 273.2,6.9 193.9,27.5" fill="#33354e" /><polygon points="245.3,0.0 273.2,0.0 273.2,4.7" fill="#25273c" /><polygon points="171.8,53.2 273.2,6.2 273.2,40.0 213.0,54.6 173.3,57.6" fill="#48a8cf" /><polygon points="171.8,53.2 273.2,6.2 273.2,15.0 186.5,51.7" fill="#b5e0ee" /><polygon points="208.6,32.6 273.2,17.9 273.2,40.0 213.0,54.6" fill="#2a86ae" /><polygon points="213.0,54.6 273.2,42.9 273.2,67.9 221.8,67.1 220.3,60.5 213.0,57.6" fill="#343f39" /><polygon points="0.0,81.1 77.8,72.3 91.1,78.1 39.7,114.1 0.0,114.1" fill="#514c47" /><polygon points="0.0,81.1 77.8,72.3 77.8,76.4 0.0,91.4" fill="#8f8f9c" /><polygon points="0.0,98.7 91.1,78.1 39.7,114.1 0.0,114.1" fill="#423d39" /><polygon points="39.7,114.1 91.1,78.1 111.6,73.7 123.4,78.1 124.8,87.0 113.1,114.1" fill="#769ba6" /><polygon points="39.7,114.1 91.1,78.1 111.6,73.7 77.8,114.1" fill="#43626a" /><polygon points="77.8,114.1 111.6,73.7 120.4,75.9 98.4,114.1" fill="#bdd3d8" /><polygon points="113.1,114.1 123.4,90.6 128.5,90.6 127.8,114.1" fill="#2a4650" /><polygon points="138.8,114.1 139.5,89.2 155.7,89.9 167.4,114.1" fill="#213943" /><polygon points="157.2,114.1 157.2,78.9 166.0,78.9 186.5,89.9 230.6,114.1" fill="#55849e" /><polygon points="157.2,114.1 157.2,78.9 161.6,78.9 176.2,114.1" fill="#a0bccb" /><polygon points="188.0,79.6 211.5,78.9 273.2,92.8 273.2,114.1 230.6,114.1 188.0,88.4" fill="#192a30" /><polygon points="188.0,89.9 273.2,107.5 273.2,114.1 230.6,114.1" fill="#37748f" /></g><filter id="w2"><feColorMatrix values="0 0 0 0 1 0 0 0 0 1 0 0 0 0 1 0 0 0 1 0"/></filter><mask id="m2"><use href="#b2" filter="url(#w2)"/></mask></defs><rect width="274" height="114" fill="url(#g2)"/><use href="#b2"/><g mask="url(#m2)" fill="none" stroke="#14222b" stroke-width="1.100" opacity=".34"><circle cx="137" cy="56" r="12.0"/><circle cx="137" cy="56" r="15.4"/><circle cx="137" cy="56" r="18.8"/><circle cx="137" cy="56" r="22.2"/><circle cx="137" cy="56" r="25.6"/><circle cx="137" cy="56" r="29.0"/><circle cx="137" cy="56" r="32.4"/><circle cx="137" cy="56" r="35.8"/><circle cx="137" cy="56" r="39.2"/><circle cx="137" cy="56" r="42.6"/><circle cx="137" cy="56" r="46.0"/><circle cx="137" cy="56" r="49.4"/><circle cx="137" cy="56" r="52.8"/><circle cx="137" cy="56" r="56.2"/><circle cx="137" cy="56" r="59.6"/><circle cx="137" cy="56" r="63.0"/><circle cx="137" cy="56" r="66.4"/><circle cx="137" cy="56" r="69.8"/><circle cx="137" cy="56" r="73.2"/><circle cx="137" cy="56" r="76.6"/><circle cx="137" cy="56" r="80.0"/><circle cx="137" cy="56" r="83.4"/><circle cx="137" cy="56" r="86.8"/><circle cx="137" cy="56" r="90.2"/><circle cx="137" cy="56" r="93.6"/><circle cx="137" cy="56" r="97.0"/><circle cx="137" cy="56" r="100.4"/><circle cx="137" cy="56" r="103.8"/><circle cx="137" cy="56" r="107.2"/><circle cx="137" cy="56" r="110.6"/><circle cx="137" cy="56" r="114.0"/><circle cx="137" cy="56" r="117.4"/><circle cx="137" cy="56" r="120.8"/><circle cx="137" cy="56" r="124.2"/><circle cx="137" cy="56" r="127.6"/><circle cx="137" cy="56" r="131.0"/><circle cx="137" cy="56" r="134.4"/><circle cx="137" cy="56" r="137.8"/><circle cx="137" cy="56" r="141.2"/><circle cx="137" cy="56" r="144.6"/><circle cx="137" cy="56" r="148.0"/><circle cx="137" cy="56" r="151.4"/><circle cx="137" cy="56" r="154.8"/><circle cx="137" cy="56" r="158.2"/><circle cx="137" cy="56" r="161.6"/><circle cx="137" cy="56" r="165.0"/><line x1="137" y1="56" x2="337.0" y2="56.0"/><line x1="137" y1="56" x2="336.2" y2="73.4"/><line x1="137" y1="56" x2="334.0" y2="90.7"/><line x1="137" y1="56" x2="330.2" y2="107.8"/><line x1="137" y1="56" x2="324.9" y2="124.4"/><line x1="137" y1="56" x2="318.3" y2="140.5"/><line x1="137" y1="56" x2="310.2" y2="156.0"/><line x1="137" y1="56" x2="300.8" y2="170.7"/><line x1="137" y1="56" x2="290.2" y2="184.6"/><line x1="137" y1="56" x2="278.4" y2="197.4"/><line x1="137" y1="56" x2="265.6" y2="209.2"/><line x1="137" y1="56" x2="251.7" y2="219.8"/><line x1="137" y1="56" x2="237.0" y2="229.2"/><line x1="137" y1="56" x2="221.5" y2="237.3"/><line x1="137" y1="56" x2="205.4" y2="243.9"/><line x1="137" y1="56" x2="188.8" y2="249.2"/><line x1="137" y1="56" x2="171.7" y2="253.0"/><line x1="137" y1="56" x2="154.4" y2="255.2"/><line x1="137" y1="56" x2="137.0" y2="256.0"/><line x1="137" y1="56" x2="119.6" y2="255.2"/><line x1="137" y1="56" x2="102.3" y2="253.0"/><line x1="137" y1="56" x2="85.2" y2="249.2"/><line x1="137" y1="56" x2="68.6" y2="243.9"/><line x1="137" y1="56" x2="52.5" y2="237.3"/><line x1="137" y1="56" x2="37.0" y2="229.2"/><line x1="137" y1="56" x2="22.3" y2="219.8"/><line x1="137" y1="56" x2="8.4" y2="209.2"/><line x1="137" y1="56" x2="-4.4" y2="197.4"/><line x1="137" y1="56" x2="-16.2" y2="184.6"/><line x1="137" y1="56" x2="-26.8" y2="170.7"/><line x1="137" y1="56" x2="-36.2" y2="156.0"/><line x1="137" y1="56" x2="-44.3" y2="140.5"/><line x1="137" y1="56" x2="-50.9" y2="124.4"/><line x1="137" y1="56" x2="-56.2" y2="107.8"/><line x1="137" y1="56" x2="-60.0" y2="90.7"/><line x1="137" y1="56" x2="-62.2" y2="73.4"/><line x1="137" y1="56" x2="-63.0" y2="56.0"/><line x1="137" y1="56" x2="-62.2" y2="38.6"/><line x1="137" y1="56" x2="-60.0" y2="21.3"/><line x1="137" y1="56" x2="-56.2" y2="4.2"/><line x1="137" y1="56" x2="-50.9" y2="-12.4"/><line x1="137" y1="56" x2="-44.3" y2="-28.5"/><line x1="137" y1="56" x2="-36.2" y2="-44.0"/><line x1="137" y1="56" x2="-26.8" y2="-58.7"/><line x1="137" y1="56" x2="-16.2" y2="-72.6"/><line x1="137" y1="56" x2="-4.4" y2="-85.4"/><line x1="137" y1="56" x2="8.4" y2="-97.2"/><line x1="137" y1="56" x2="22.3" y2="-107.8"/><line x1="137" y1="56" x2="37.0" y2="-117.2"/><line x1="137" y1="56" x2="52.5" y2="-125.3"/><line x1="137" y1="56" x2="68.6" y2="-131.9"/><line x1="137" y1="56" x2="85.2" y2="-137.2"/><line x1="137" y1="56" x2="102.3" y2="-141.0"/><line x1="137" y1="56" x2="119.6" y2="-143.2"/><line x1="137" y1="56" x2="137.0" y2="-144.0"/><line x1="137" y1="56" x2="154.4" y2="-143.2"/><line x1="137" y1="56" x2="171.7" y2="-141.0"/><line x1="137" y1="56" x2="188.8" y2="-137.2"/><line x1="137" y1="56" x2="205.4" y2="-131.9"/><line x1="137" y1="56" x2="221.5" y2="-125.3"/><line x1="137" y1="56" x2="237.0" y2="-117.2"/><line x1="137" y1="56" x2="251.7" y2="-107.8"/><line x1="137" y1="56" x2="265.6" y2="-97.2"/><line x1="137" y1="56" x2="278.4" y2="-85.4"/><line x1="137" y1="56" x2="290.2" y2="-72.6"/><line x1="137" y1="56" x2="300.8" y2="-58.7"/><line x1="137" y1="56" x2="310.2" y2="-44.0"/><line x1="137" y1="56" x2="318.3" y2="-28.5"/><line x1="137" y1="56" x2="324.9" y2="-12.4"/><line x1="137" y1="56" x2="330.2" y2="4.2"/><line x1="137" y1="56" x2="334.0" y2="21.3"/><line x1="137" y1="56" x2="336.2" y2="38.6"/></g></svg><span class="t tt" style="left:6.55px;top:133.75px;font-size:20.5px;letter-spacing:0.536px;">Comparison Between</span><span class="t tt" style="left:7.45px;top:157.75px;font-size:20.5px;letter-spacing:-0.296px;">PRM and CRM</span><span class="t ts" style="left:7.95px;top:182.75px;font-size:12.0px;letter-spacing:-0.377px;">VIDEO</span><svg style="left:214.5px;top:227.5px" width="44" height="44" viewBox="0 0 44 44"><circle cx="22" cy="22" r="19.400" fill="none" stroke="#4338a0" stroke-width="4.600"/><path d="M17.800 13.500v17.500l13.200-8.700z" fill="#4338a0" stroke="#4338a0" stroke-width="1.600" stroke-linejoin="round"/></svg></div><h3 class="t" style="left:17.95px;top:352.25px;font-size:15px;letter-spacing:0.382px;color:#1f5a94;-webkit-text-stroke:0.5px currentColor;font-weight:400;">Comparison Between PRM and CRM...</h3><svg style="left:17.5px;top:383.5px" width="21" height="17" viewBox="0 0 21 17" fill="none" stroke="#5a616b" stroke-width="1.200" stroke-linejoin="round"><path d="M.7 8.400C3.800 3.500 7 .8 10.400.8s6.600 2.700 9.700 7.600c-3.100 4.900-6.300 7.600-9.700 7.600S3.800 13.300.7 8.400z"/><circle cx="10.400" cy="8.400" r="2.900"/></svg><span class="t" style="left:43.55px;top:384.25px;font-size:16px;letter-spacing:-1.198px;">54</span><svg style="left:72.5px;top:383.2px" width="21" height="16.200" viewBox="0 0 22 17" fill="none" stroke="#5a616b" stroke-width="1.200" stroke-linecap="round" stroke-linejoin="round"><path d="M6.500 15.800H5.300a4.600 4.600 0 0 1-1-9.100 6.400 6.400 0 0 1 12.300-1.300 5.200 5.200 0 0 1 .2 10.400h-1.300"/><path d="M10.800 9.500v6M8.600 13.400l2.200 2.200 2.200-2.200"/></svg><span class="t" style="left:98.55px;top:384.25px;font-size:16px;">0</span></article>
<article class="card" style="left:1123.25px;top:176.75px"><span class="cd" style="left:269.8px;top:24.9px"><i style="left:0.00px"></i><i style="left:5.63px"></i><i style="left:11.26px"></i><i style="left:16.89px"></i></span><div class="thumb" style="left:17.0px;top:44.5px"><svg style="left:0;top:0" width="274" height="117" viewBox="0 0 274 117"><defs><radialGradient id="g3" cx="137" cy="55" r="125" gradientUnits="userSpaceOnUse"><stop offset="0" stop-color="#3a3d40"/><stop offset=".38" stop-color="#70767b"/><stop offset=".5" stop-color="#4b5055"/><stop offset=".66" stop-color="#2b2f32"/><stop offset=".85" stop-color="#181a1c"/><stop offset="1" stop-color="#101113"/></radialGradient><filter id="b3" x="-20%" y="-20%" width="140%" height="140%"><feGaussianBlur stdDeviation="3"/></filter><filter id="b3b"><feGaussianBlur stdDeviation=".5"/></filter></defs><rect width="274" height="117" fill="url(#g3)"/><circle cx="137" cy="54.700" r="42" fill="#2b2d30"/><circle cx="137" cy="54.700" r="46" fill="none" stroke="#fff" stroke-width="12" opacity=".55" filter="url(#b3)"/><circle cx="137" cy="54.700" r="46" fill="none" stroke="#fff" stroke-width="8.600" filter="url(#b3b)"/><rect y="106" width="274" height="11" fill="#0b0c0d"/><rect y="107.500" width="274" height="3" fill="#3c4043" opacity=".8"/><rect x="70" y="107.300" width="134" height="3.200" fill="#9a9fa3" opacity=".38" filter="url(#b3b)"/><g fill="#0c0d0e" stroke="#c9ccce" stroke-width=".6" stroke-linejoin="round"><circle cx="137.300" cy="50.500" r="4.300"/><path d="M131 58.500l6-2.500 6.500 2.500 3.500 9.500 2.200 11-1.800 1-3.600-9.500-.8 10.500 2.300 15.500 1.200 16h-3.600l-2.400-15.500-3-12-3 12-2.400 15.500h-3.600l1.200-16 2.300-15.500-.8-10.500-3.600 9.500-1.800-1 2.200-11z"/></g></svg><span class="t tt" style="left:9.45px;top:136.75px;font-size:20.5px;letter-spacing:0.496px;">Future Trends for Partner</span><span class="t tt" style="left:9.75px;top:161.75px;font-size:20.5px;letter-spacing:0.482px;">Portal Software</span><span class="t ts" style="left:10.45px;top:187.75px;font-size:12.0px;letter-spacing:-0.276px;">SOLUTION BRIEF</span><svg style="left:215.0px;top:227.2px" width="46" height="45" viewBox="0 0 46 45"><rect x="24" y="6.200" width="20.800" height="32.600" fill="#fff" stroke="#d24726" stroke-width="1.500"/><circle cx="34.500" cy="16" r="5.600" fill="#d24726"/><path d="M35.500 9.300v5.700h5.700a5.700 5.700 0 0 0-5.700-5.700z" fill="#fff" stroke="#d24726" stroke-width=".8"/><path d="M28 27.200h13M28 32.300h13" stroke="#d24726" stroke-width="1.700"/><path d="M0 5.300 26.500 0v45L0 39.700z" fill="#d24726"/><text x="7.500" y="29.800" font-family="Liberation Sans,Arial,sans-serif" font-weight="700" font-size="20" fill="#fff">P</text></svg></div><h3 class="t" style="left:17.05px;top:352.25px;font-size:15px;letter-spacing:0.478px;color:#1f5a94;-webkit-text-stroke:0.5px currentColor;font-weight:400;">Future Trends for Partner Portal...</h3><svg style="left:17.5px;top:383.5px" width="21" height="17" viewBox="0 0 21 17" fill="none" stroke="#5a616b" stroke-width="1.200" stroke-linejoin="round"><path d="M.7 8.400C3.800 3.500 7 .8 10.400.8s6.600 2.700 9.700 7.600c-3.100 4.900-6.300 7.600-9.700 7.600S3.800 13.300.7 8.400z"/><circle cx="10.400" cy="8.400" r="2.900"/></svg><span class="t" style="left:43.75px;top:384.25px;font-size:16px;letter-spacing:0.402px;">44</span><svg style="left:73.5px;top:383.2px" width="21" height="16.200" viewBox="0 0 22 17" fill="none" stroke="#5a616b" stroke-width="1.200" stroke-linecap="round" stroke-linejoin="round"><path d="M6.500 15.800H5.300a4.600 4.600 0 0 1-1-9.100 6.400 6.400 0 0 1 12.300-1.300 5.200 5.200 0 0 1 .2 10.400h-1.300"/><path d="M10.800 9.500v6M8.600 13.400l2.200 2.200 2.200-2.200"/></svg><span class="t" style="left:99.45px;top:384.25px;font-size:16px;">5</span></article>
<article class="card" style="left:439.25px;top:633.25px"><span class="cd" style="left:269.8px;top:25.0px"><i style="left:0.00px"></i><i style="left:5.63px"></i><i style="left:11.26px"></i><i style="left:16.89px"></i></span><div class="thumb" style="left:17.0px;top:44.5px"><svg style="left:0;top:0" width="274" height="117" viewBox="0 0 274 117"><defs><linearGradient id="g4" x1="0" x2="1"><stop offset="0" stop-color="#dcebf2"/><stop offset=".35" stop-color="#eef5f8"/><stop offset=".7" stop-color="#fbfcfd"/><stop offset="1" stop-color="#e3eef4"/></linearGradient></defs><rect width="274" height="117" fill="url(#g4)"/><polygon points="0.0,0.0 66.1,0.0 66.1,116.5 0.0,116.5" fill="#dbeaf1" /><polygon points="66.1,0.0 75.6,0.0 75.6,116.5 66.1,116.5" fill="#cfe2ec" /><polygon points="130.7,0.0 148.3,0.0 148.3,52.6 130.7,52.6" fill="#d6e6ee" /><polygon points="257.0,0.0 273.2,0.0 273.2,82.0 257.0,82.0" fill="#cfe0ea" /><polygon points="7.3,29.1 17.6,28.3 19.1,40.8 8.8,42.3" fill="#e8a877" /><polygon points="1.5,15.9 7.3,15.9 8.1,25.4 1.5,25.4" fill="#e9b27f" /><polygon points="9.5,43.0 17.6,43.0 17.6,55.5 9.5,55.5" fill="#f0b9b0" /><polygon points="1.5,42.3 9.5,42.3 10.3,58.5 1.5,58.5" fill="#b9d3df" /><polygon points="19.1,30.6 25.7,30.6 25.7,42.3 19.1,42.3" fill="#cfe0c9" /><polygon points="28.6,22.5 39.7,23.2 57.3,36.4 61.7,44.5 73.4,52.6 72.0,70.2 61.7,67.3 51.4,46.7 32.3,39.4 27.9,32.0" fill="#c9906f" /><polygon points="61.7,67.3 73.4,52.6 107.2,48.2 135.1,45.2 157.2,48.2 173.3,64.3 177.7,96.6 176.2,116.5 101.3,116.5 104.3,76.1 83.7,74.6" fill="#2a3860" /><polygon points="101.3,116.5 104.3,76.1 127.8,70.2 142.5,116.5" fill="#222e52" /><polygon points="135.1,17.3 142.5,8.5 158.6,7.0 167.4,17.3 164.5,30.6 160.1,40.8 154.2,49.6 139.5,49.6 135.1,40.8" fill="#c08a6b" /><polygon points="136.6,20.3 142.5,8.5 158.6,6.3 168.2,15.9 166.0,32.0 160.1,30.6 158.6,18.8 143.9,15.9" fill="#2b2420" /><polygon points="135.1,37.9 154.2,42.3 154.2,50.4 140.3,50.4" fill="#6e4c3b" /><polygon points="182.1,116.5 185.1,87.8 192.4,67.3 213.0,57.0 236.5,52.6 264.4,64.3 273.2,82.0 273.2,116.5" fill="#b9cde4" /><polygon points="213.0,57.0 224.7,62.9 236.5,52.6 230.6,49.6 215.9,52.6" fill="#5e6f86" /><polygon points="182.1,116.5 185.1,87.8 192.4,67.3 204.2,62.9 207.1,116.5" fill="#9db7d3" /><polygon points="207.1,27.6 214.4,17.3 230.6,14.4 240.9,26.1 237.9,42.3 230.6,52.6 215.9,54.0 208.6,46.7" fill="#cfa189" /><polygon points="214.4,17.3 224.7,12.9 237.9,17.3 243.8,27.6 239.4,40.8 235.0,37.9 232.1,26.1 224.7,20.3" fill="#8f8f8f" /><polygon points="208.6,43.8 218.8,46.7 230.6,52.6 215.9,54.3" fill="#b9b4ae" /><polygon points="201.2,116.5 204.2,98.1 221.8,108.4 221.8,116.5" fill="#ded9d2" /><polygon points="258.5,116.5 264.4,106.9 273.2,104.0 273.2,116.5" fill="#d9a57e" /></svg><span class="t tt" style="left:10.15px;top:136.25px;font-size:20.5px;letter-spacing:0.217px;">Why Do We Need</span><span class="t tt" style="left:9.35px;top:161.25px;font-size:20.5px;letter-spacing:0.591px;">Partnership Management</span><span class="t tt" style="left:10.35px;top:186.25px;font-size:20.5px;letter-spacing:0.172px;">Strategies</span><span class="t ts" style="left:10.35px;top:213.25px;font-size:12.0px;letter-spacing:-0.237px;">SOLUTION BRIEF</span><svg style="left:214.4px;top:227.0px" width="46" height="45" viewBox="0 0 46 45"><rect x="24" y="6.200" width="20.800" height="32.600" fill="#fff" stroke="#d24726" stroke-width="1.500"/><circle cx="34.500" cy="16" r="5.600" fill="#d24726"/><path d="M35.500 9.300v5.700h5.700a5.700 5.700 0 0 0-5.700-5.700z" fill="#fff" stroke="#d24726" stroke-width=".8"/><path d="M28 27.200h13M28 32.300h13" stroke="#d24726" stroke-width="1.700"/><path d="M0 5.300 26.500 0v45L0 39.700z" fill="#d24726"/><text x="7.500" y="29.800" font-family="Liberation Sans,Arial,sans-serif" font-weight="700" font-size="20" fill="#fff">P</text></svg></div><h3 class="t" style="left:18.05px;top:352.75px;font-size:15px;letter-spacing:0.433px;color:#1f5a94;-webkit-text-stroke:0.5px currentColor;font-weight:400;">Why Do We Need Partnership...</h3></article>
<article class="card" style="left:781.25px;top:633.25px"><span class="cd" style="left:269.8px;top:25.0px"><i style="left:0.00px"></i><i style="left:5.63px"></i><i style="left:11.26px"></i><i style="left:16.89px"></i></span><div class="thumb" style="left:17.0px;top:44.5px"><svg style="left:0;top:0" width="274" height="117" viewBox="0 0 274 117"><rect width="274" height="117" fill="#8a8075"/><polygon points="0.0,0.0 39.7,0.0 39.7,116.5 0.0,116.5" fill="#80766b" /><polygon points="39.7,0.0 77.8,0.0 77.8,67.3 39.7,67.3" fill="#93897c" /><polygon points="41.1,26.9 74.9,26.9 74.9,58.5 41.1,58.5" fill="#c4d6e2" /><polygon points="82.2,26.9 113.1,26.9 113.1,70.2 82.2,70.2" fill="#dfe9ef" /><polygon points="149.8,26.9 190.9,26.9 190.9,59.9 149.8,59.9" fill="#d5e2ea" /><polygon points="77.8,0.0 89.6,0.0 89.6,82.0 77.8,82.0" fill="#a3927d" /><polygon points="190.9,0.0 213.0,0.0 213.0,59.9 190.9,59.9" fill="#9b9388" /><polygon points="213.0,0.0 273.2,0.0 273.2,37.9 213.0,37.9" fill="#a7a199" /><polygon points="48.5,1.2 72.0,1.2 72.0,6.3 48.5,6.3" fill="#f1f1ea" /><polygon points="41.1,58.5 89.6,58.5 89.6,80.5 41.1,80.5" fill="#5b4336" /><polygon points="57.3,60.7 74.9,60.7 74.9,71.7 57.3,71.7" fill="#c8582c" /><polygon points="146.9,60.7 188.0,60.7 188.0,72.4 146.9,72.4" fill="#e0703a" /><polygon points="146.9,72.4 215.9,72.4 215.9,83.4 146.9,83.4" fill="#6a625a" /><polygon points="148.3,83.4 215.9,82.0 273.2,109.9 273.2,116.5 146.9,116.5" fill="#a69d92" /><polygon points="164.5,82.0 190.9,80.5 198.3,96.6 179.2,99.6" fill="#2b2a2a" /><polygon points="189.5,42.3 204.2,43.8 205.6,76.1 188.0,74.6" fill="#1c1d22" /><polygon points="188.0,42.3 191.7,42.3 191.7,74.6 188.0,74.6" fill="#d9dde0" /><polygon points="214.4,32.0 260.0,25.4 267.3,25.4 268.8,96.6 260.0,93.7 215.9,84.9" fill="#141518" /><polygon points="260.0,25.4 267.3,25.4 268.8,96.6 261.4,95.2" fill="#3a3c40" /><polygon points="268.0,10.0 273.2,10.0 273.2,106.9 268.8,106.9" fill="#b8bcc0" /><polygon points="245.3,92.2 254.1,92.2 254.1,116.5 245.3,116.5" fill="#7c7f83" /><polygon points="208.6,97.4 236.5,97.4 236.5,104.0 208.6,104.0" fill="#c9ccce" /><polygon points="207.1,70.2 214.4,70.2 214.4,80.5 207.1,80.5" fill="#e8862f" /><polygon points="63.2,87.8 74.9,84.2 86.7,85.6 86.7,116.5 69.0,116.5" fill="#3b3b3d" /><polygon points="12.5,71.7 57.3,69.5 69.0,116.5 22.0,116.5" fill="#17171a" /><polygon points="0.0,99.6 17.6,101.0 17.6,111.3 0.0,111.3" fill="#a08f3a" /><polygon points="108.7,12.9 117.5,2.6 132.2,0.4 145.4,7.0 149.8,23.2 148.3,49.6 143.9,67.3 127.8,64.3 113.1,57.0 91.1,61.4 101.3,48.2 107.2,30.6" fill="#c39d66" /><polygon points="86.7,116.5 89.6,76.1 104.3,55.5 127.8,62.9 143.9,87.8 146.9,116.5" fill="#2c9fda" /><polygon points="86.7,116.5 89.6,76.1 98.4,62.9 107.2,82.0 113.1,116.5" fill="#2589c2" /><polygon points="126.3,62.9 135.1,67.3 142.5,96.6 141.0,116.5 135.1,116.5 133.7,87.8" fill="#cfe0ee" /><ellipse cx="134.4" cy="33.5" rx="13" ry="18" fill="#e6b697" transform="rotate(-8 134.4 33.5)"/><polygon points="111.6,15.9 120.4,5.6 136.6,4.1 146.9,12.9 148.3,23.2 139.5,15.9 127.8,14.4 120.4,23.2 117.5,42.3 111.6,37.9" fill="#cda872" /><path d="M128.5 40.5q6.500 3.500 12.500-.8" stroke="#fff" stroke-width="1.700" fill="none"/><ellipse cx="110.9" cy="31.3" rx="3.800" ry="5.500" fill="#1a1a1c"/><path d="M109.4 29.1Q111.6 2.6 127.8 1.2" stroke="#1a1a1c" stroke-width="1.300" fill="none"/></svg><span class="t tt" style="left:9.25px;top:136.25px;font-size:20.5px;letter-spacing:0.564px;">10 Telemarketing Tips</span><span class="t ts" style="left:9.75px;top:161.25px;font-size:12.0px;letter-spacing:-0.377px;">VIDEO</span><svg style="left:214.8px;top:227.2px" width="44" height="44" viewBox="0 0 44 44"><circle cx="22" cy="22" r="19.400" fill="none" stroke="#4338a0" stroke-width="4.600"/><path d="M17.800 13.500v17.500l13.200-8.700z" fill="#4338a0" stroke="#4338a0" stroke-width="1.600" stroke-linejoin="round"/></svg></div><h3 class="t" style="left:17.05px;top:352.75px;font-size:15px;letter-spacing:0.536px;color:#1f5a94;-webkit-text-stroke:0.5px currentColor;font-weight:400;">10 Telemarketing Tips</h3></article>
<article class="card" style="left:1123.25px;top:633.25px"><span class="cd" style="left:269.8px;top:25.0px"><i style="left:0.00px"></i><i style="left:5.63px"></i><i style="left:11.26px"></i><i style="left:16.89px"></i></span><div class="thumb" style="left:17.0px;top:44.5px"><svg style="left:0;top:0" width="274" height="117" viewBox="0 0 274 117"><defs><linearGradient id="g6" x1="0" y1="0" x2=".25" y2="1"><stop offset="0" stop-color="#86b0d4"/><stop offset=".45" stop-color="#bfd0df"/><stop offset="1" stop-color="#e6e0e2"/></linearGradient><radialGradient id="g6b" cx=".85" cy="1" r=".7"><stop offset="0" stop-color="#f0d8d2"/><stop offset="1" stop-color="#f0d8d2" stop-opacity="0"/></radialGradient><linearGradient id="g6c" x1="0" y1="0" x2="0" y2="1"><stop offset="0" stop-color="#a8423f"/><stop offset="1" stop-color="#dc8c84"/></linearGradient></defs><rect width="274" height="117" fill="url(#g6)"/><rect width="274" height="117" fill="url(#g6b)"/><line x1="105.8" y1="0.9" x2="185.1" y2="116.5" stroke="#4b2528" stroke-width="1.200"/><polygon points="69.0,19.5 83.7,11.5 95.5,7.0 105.8,0.9 117.5,17.3 107.2,20.3 96.9,27.6 85.2,35.0" fill="#2a1d20" /><circle cx="164.8" cy="73.9" r="5.800" fill="#9d3b3a"/><polygon points="141.0,52.6 145.4,54.0 143.9,62.9 138.8,70.2 148.3,73.1 158.6,76.1 170.4,83.4 168.2,95.2 154.2,96.6 151.3,101.8 168.9,103.3 177.0,116.5 133.7,116.5 127.8,105.5 135.1,89.3 143.9,79.0 133.7,70.2 135.1,62.9" fill="url(#g6c)" /></svg><span class="t tt" style="left:9.25px;top:136.25px;font-size:20.5px;letter-spacing:0.317px;">Global Business Solution</span><span class="t ts" style="left:10.65px;top:162.25px;font-size:12.0px;letter-spacing:-0.244px;">CAMPAIGN KIT</span><svg style="left:216.3px;top:229.2px" width="43" height="42" viewBox="0 0 43 42" fill="none" stroke="#c5201f" stroke-width="2.100" stroke-linejoin="round" stroke-linecap="round"><path d="M1.700 39.600C.3 37 5 32.600 10.500 32c6.500-2 13.500-5 20-5.500 5.500-1 11.300-.5 11.300 2 0 2.500-6.800 2.500-11.300-.5C25 24 22 18 22.500 10c.5-6-.5-8.500-2-8.500-2 0-3.500 3.500-2.500 8.500 1 6-2 14-6 20.500C9 35.500 3.500 42 1.700 39.600z"/></svg></div><h3 class="t" style="left:18.05px;top:352.75px;font-size:15px;letter-spacing:0.471px;color:#1f5a94;-webkit-text-stroke:0.5px currentColor;font-weight:400;">Widget Global Business Solution...</h3></article>
</main>
</body>
</html>
